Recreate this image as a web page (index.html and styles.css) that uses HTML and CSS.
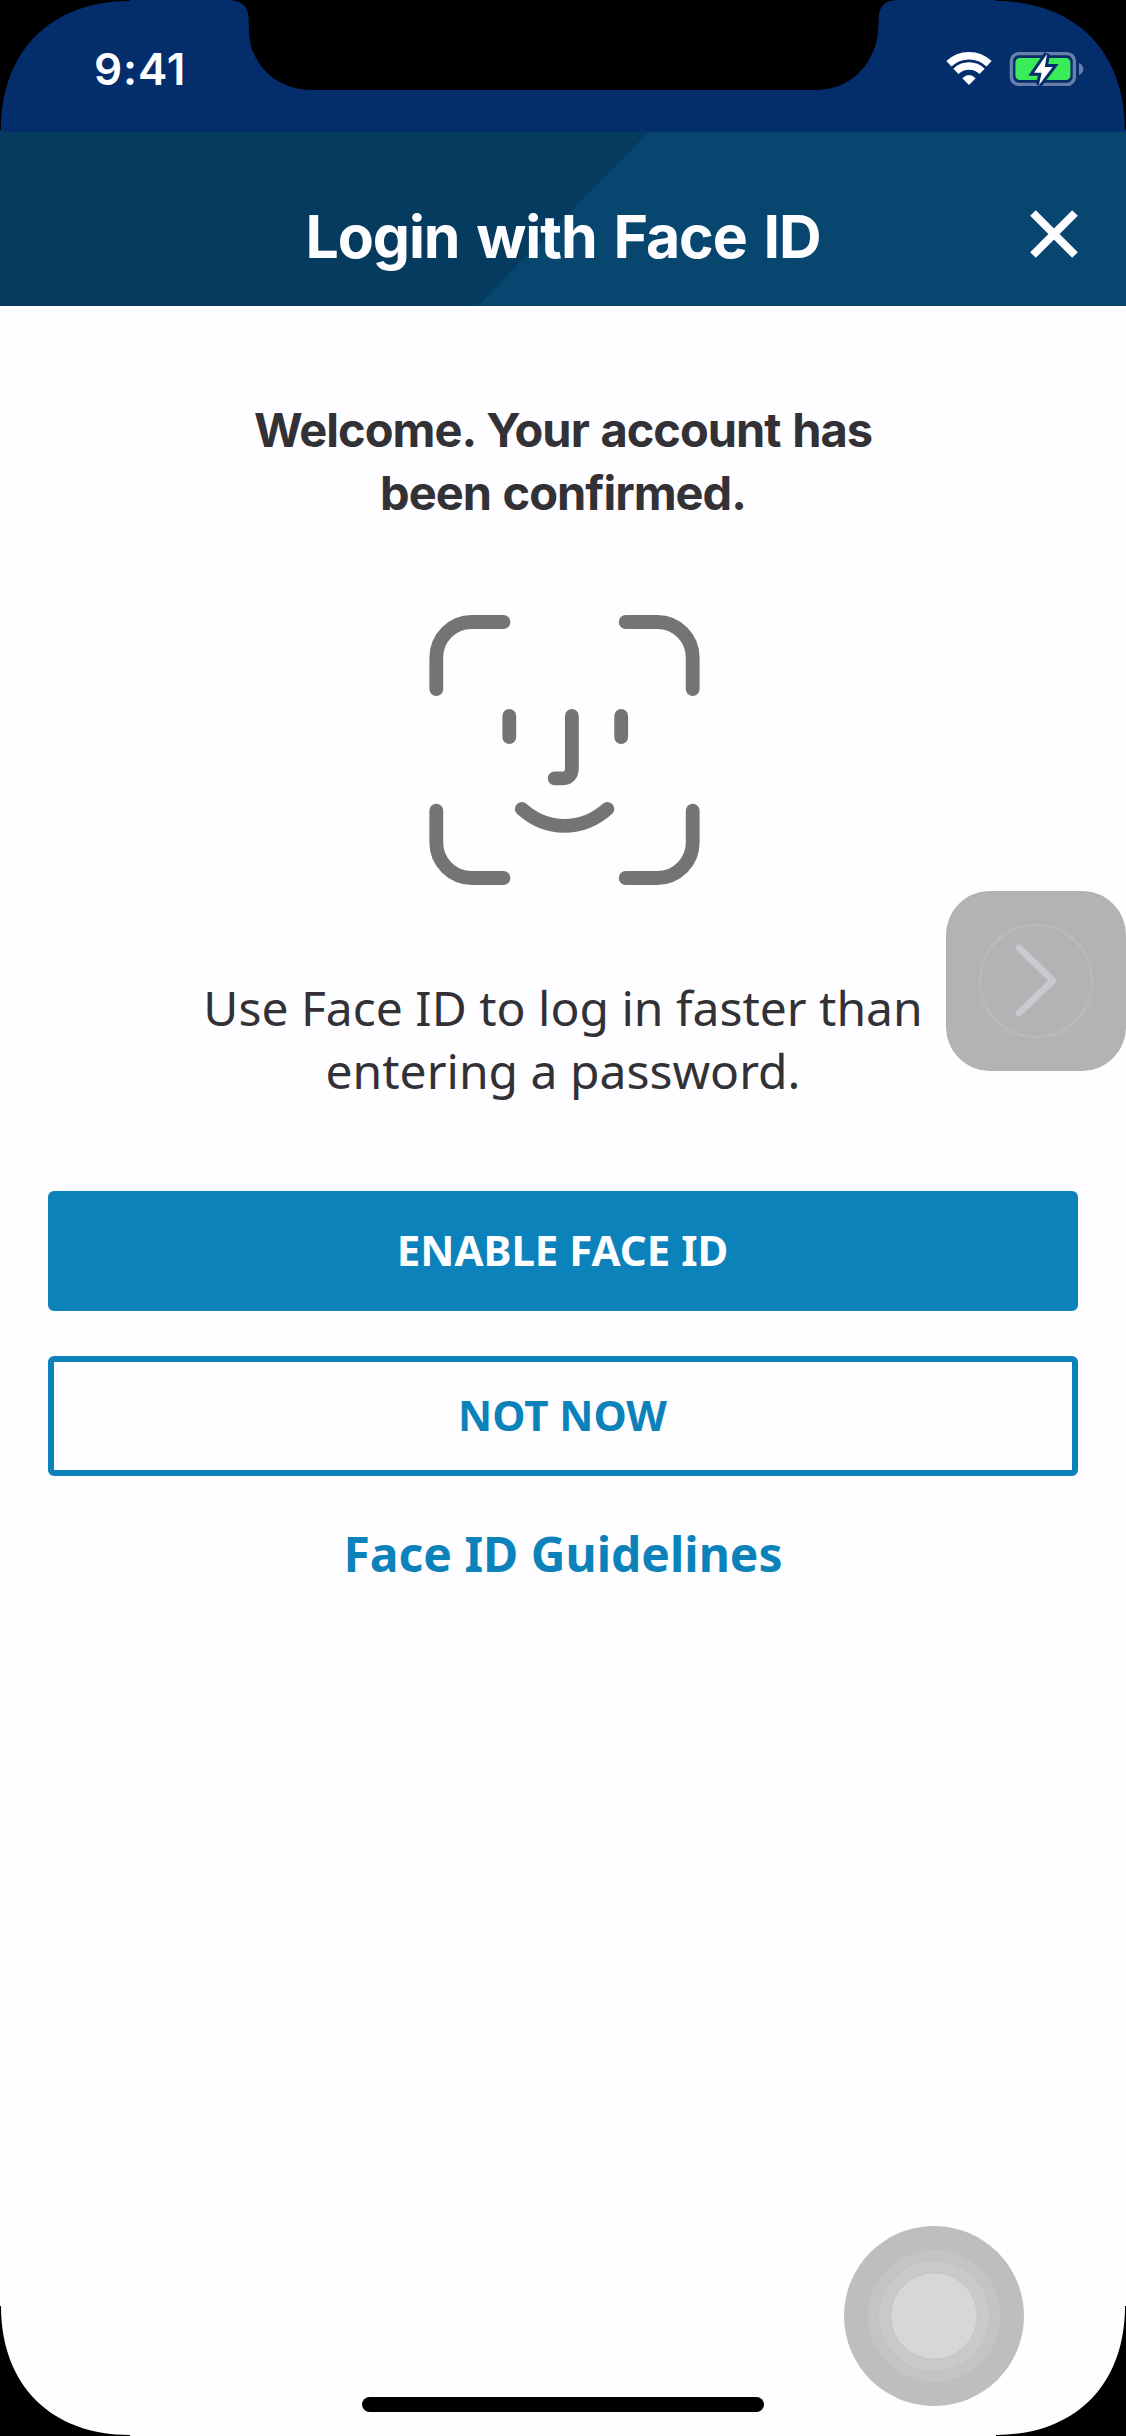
FILE: index.html
```html
<!DOCTYPE html>
<html lang="en">
<head>
<meta charset="utf-8">
<title>Login with Face ID</title>
<link rel="stylesheet" href="styles.css">
</head>
<body>
<div class="screen">
  <div class="status-bar">
    <span class="time">9:41</span>
    <div class="status-icons">
      <svg class="wifi" viewBox="945 51 48 36" width="48" height="36">
        <path d="M948.9 63.8A29.2 29.2 0 0 1 989.1 63.8" />
        <path d="M955.9 71.3A18.8 18.8 0 0 1 982.1 71.3" />
        <path class="wifi-dot" d="M969 85L962.3 78.2Q969 72 975.7 78.2Z" />
      </svg>
      <svg class="battery" viewBox="1009 50 76 38" width="76" height="38">
        <rect class="battery-shell" x="1011.4" y="53.6" width="63" height="30.8" rx="7.5" />
        <path class="battery-cap" d="M1079 63Q1083.3 65 1083.3 69T1079 75Z" />
        <rect class="battery-level" x="1015.4" y="58" width="55" height="22" rx="4.5" />
        <path class="bolt" d="M1047 54L1034 72.8H1041.6L1039 85L1052.6 67H1044.8Z" />
      </svg>
    </div>
  </div>
  <header class="header">
    <h1 class="title">Login with Face ID</h1>
    <svg class="close" viewBox="0 0 48 48" width="48" height="48"><path d="M3 3L45 45M45 3L3 45" /></svg>
  </header>
  <main class="content">
    <h2 class="welcome">Welcome. Your account has<br>been confirmed.</h2>
    <svg class="face" viewBox="0 0 330 320" width="330" height="320">
      <path d="M36.3 99V67.5A35.5 35.5 0 0 1 71.8 32H103.5M225.7 32H257.2A35.5 35.5 0 0 1 292.7 67.5V99M36.3 220.7V252.5A35.5 35.5 0 0 0 71.8 288H103.5M225.7 288H257.2A35.5 35.5 0 0 0 292.7 252.5V220.7" />
      <path d="M109.3 126V147M221.2 126V147M171.9 126V178Q171.9 188.4 161.5 188.4H154.7M121.8 218.8C147 241.5 182 241.5 207.4 218.8" />
    </svg>
    <p class="message">Use Face ID to log in faster than<br>entering a password.</p>
    <div class="actions">
      <button class="button primary">ENABLE FACE ID</button>
      <button class="button secondary">NOT NOW</button>
      <a class="guidelines">Face ID Guidelines</a>
    </div>
  </main>
  <svg class="side-tab" viewBox="0 0 180 180" width="180" height="180">
    <rect class="tab-bg" width="180" height="180" rx="44" />
    <circle class="tab-ring" cx="90" cy="90" r="56" />
    <path class="tab-arrow" d="M73 57L107 89.5L73 122" />
  </svg>
  <svg class="touch" viewBox="0 0 180 180" width="180" height="180">
    <circle class="touch-1" cx="90" cy="90" r="90" />
    <circle class="touch-2" cx="90" cy="90" r="66" />
    <circle class="touch-3" cx="90" cy="90" r="56" />
    <circle class="touch-4" cx="90" cy="90" r="43.3" />
  </svg>
  <div class="home-bar"></div>
  <svg class="bezel" viewBox="0 0 1126 2436" width="1126" height="2436">
    <path d="M0 0H130V1C52 1 1 50 1 130H0Z" />
    <path d="M1126 0H996V1C1074 1 1125 50 1125 130H1126Z" />
    <path d="M0 2436H130V2435C52 2435 1 2386 1 2306H0Z" />
    <path d="M1126 2436H996V2435C1074 2435 1125 2386 1125 2306H1126Z" />
    <path d="M226 0C241 0 248.5 5 248.7 20C249 37 249 44 255 56C264 75 284 90 312 90H816C842 90 862 75 871 56C877 44 878 37 878.7 20C879 5 885 0 900 0Z" />
  </svg>
</div>
</body>
</html>
```
FILE: styles.css
```css
* { box-sizing: border-box; }

body { margin: 0; }

.screen {
  position: relative;
  display: flex;
  flex-direction: column;
  width: 1126px;
  height: 2436px;
  overflow: hidden;
  background: #fefdff;
  color: #323135;
  font-family: "Noto Sans", sans-serif;
}

.status-bar {
  display: flex;
  justify-content: space-between;
  height: 132px;
  padding: 42px 41px 0 94px;
  background: #042d6b;
}

.time {
  color: #fff;
  font: 600 44px/54px Inter, sans-serif;
  letter-spacing: 0.9px;
}

.status-icons {
  display: flex;
  align-items: center;
  gap: 16px;
  height: 54px;
}

.wifi path { fill: none; stroke: #fff; stroke-width: 7.4; }
.wifi .wifi-dot { fill: #fff; stroke: none; }
.battery-shell { fill: none; stroke: #6880a9; stroke-width: 3.4; }
.battery-cap { fill: #6880a9; }
.battery-level { fill: #3bec59; }
.bolt { fill: #fff; stroke: #042d6b; stroke-width: 6; paint-order: stroke; }

.header {
  display: grid;
  grid-template-columns: 48px 1fr 48px;
  height: 174px;
  padding: 66px 48px 0;
  background-color: #06466f;
  background-image: linear-gradient(134.6deg, #053b5e 461.5px, transparent 462.5px);
}

.title {
  grid-column: 2;
  margin: 0;
  color: #fefdff;
  text-align: center;
  white-space: nowrap;
  font: 700 59px/78px Inter, sans-serif;
  letter-spacing: -1.1px;
  word-spacing: 4px;
}

.close {
  margin-top: 12px;
  fill: none;
  stroke: #fefdff;
  stroke-width: 8;
}

.content {
  display: flex;
  flex-direction: column;
  align-items: center;
}

.welcome {
  margin: 92px 0 0;
  text-align: center;
  white-space: nowrap;
  font: 700 47px/63px Inter, sans-serif;
  letter-spacing: -1px;
  word-spacing: 1.5px;
}

.face {
  margin-top: 66px;
  margin-left: 4px;
  fill: none;
  stroke: #757376;
  stroke-width: 13.8;
  stroke-linecap: round;
}

.message {
  margin: 66px 0 0;
  text-align: center;
  white-space: nowrap;
  font-size: 48px;
  line-height: 63px;
}

.actions {
  display: flex;
  flex-direction: column;
  align-items: center;
  width: 1030px;
  margin-top: 89px;
}

.button {
  width: 100%;
  height: 120px;
  padding: 0 1px 2px 0;
  border: 6px solid #0c82bb;
  border-radius: 6px;
  font: 700 42px/60px "Noto Sans", sans-serif;
}

.primary { background: #0c82bb; color: #fefdff; }
.secondary { margin-top: 45px; background: #fefdff; color: #0c82bb; }

.guidelines {
  margin-top: 46px;
  color: #0c82bb;
  font-weight: 700;
  font-size: 48px;
  line-height: 63px;
}

.side-tab { position: absolute; left: 946px; top: 891px; }
.tab-bg { fill: #b4b2b5; }
.tab-ring { fill: none; stroke: #bab8bb; stroke-width: 3; }
.tab-arrow { fill: none; stroke: #cbc9cd; stroke-width: 6.6; stroke-linecap: round; stroke-linejoin: round; }

.touch { position: absolute; left: 844px; top: 2226px; }
.touch-1 { fill: #bfbdc0; }
.touch-2 { fill: #c5c3c6; }
.touch-3 { fill: #cac8cb; stroke: #c1bfc2; stroke-width: 1; }
.touch-4 { fill: #d8d6d9; stroke: #c5c3c6; stroke-width: 1; }

.home-bar {
  position: absolute;
  left: 362px;
  top: 2397px;
  width: 402px;
  height: 15px;
  border-radius: 8px;
  background: #000;
}

.bezel { position: absolute; left: 0; top: 0; }
```
